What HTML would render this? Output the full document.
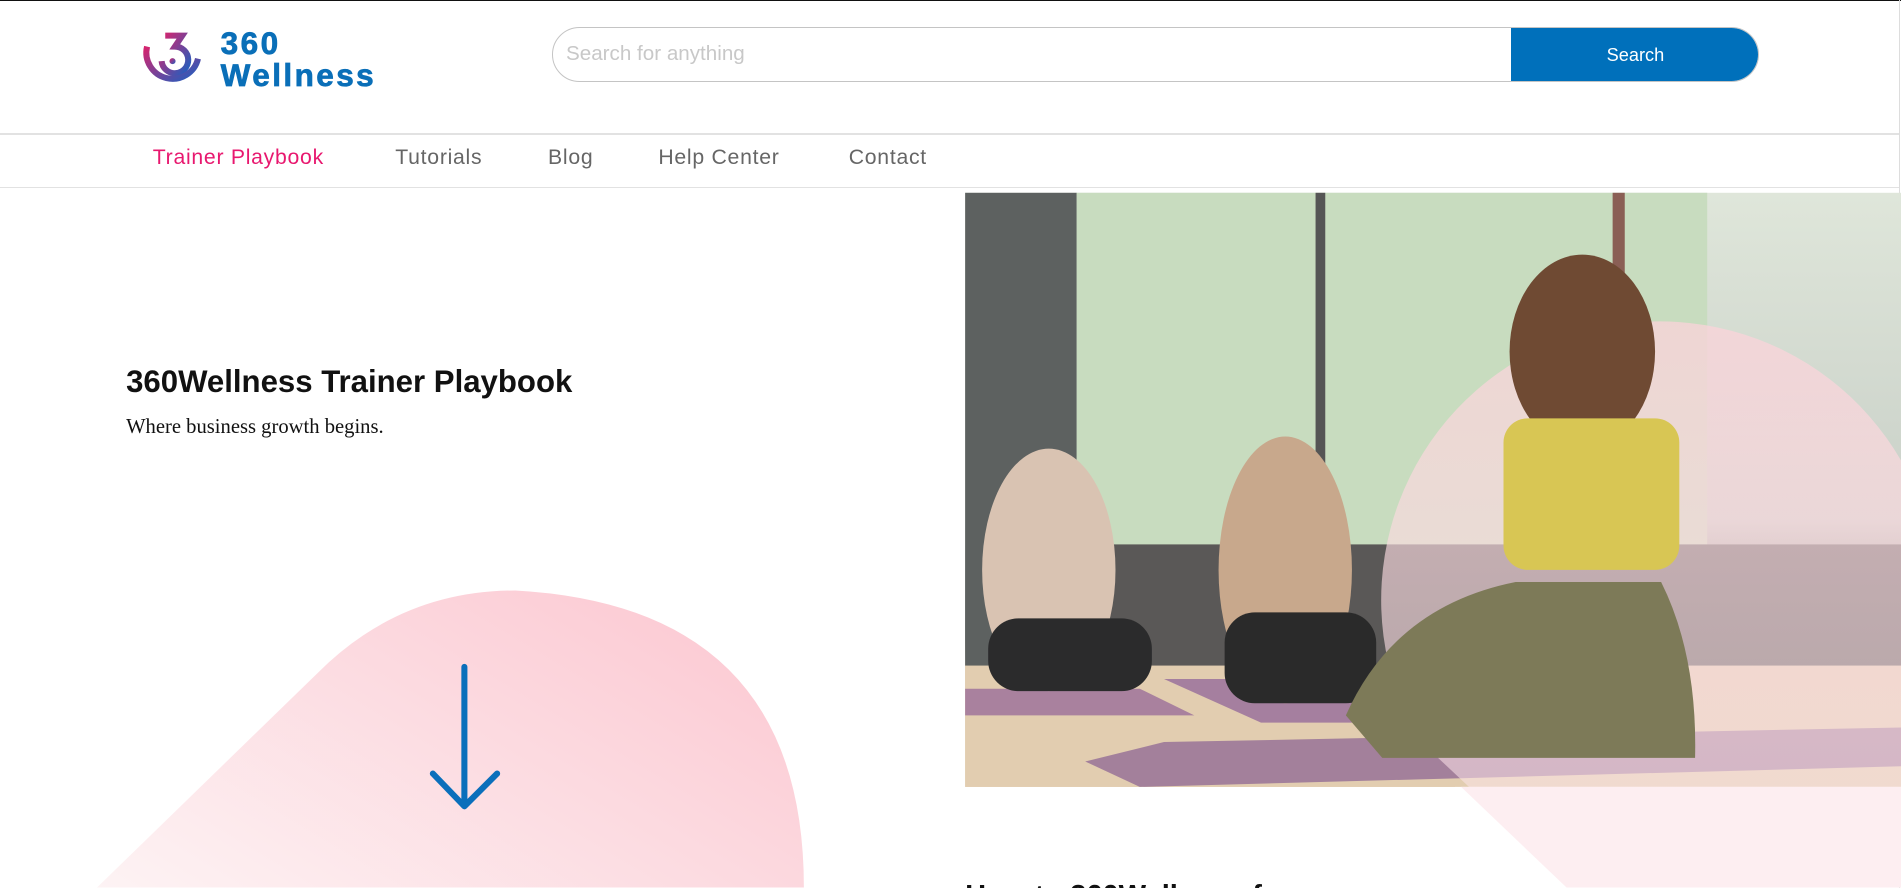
<!DOCTYPE html>
<html><head><meta charset="utf-8"><style>
html,body{margin:0;padding:0;overflow:hidden;background:#fff}
body{zoom:1.2125;width:1568px;height:732px;position:relative;font-family:"Liberation Sans",Arial,sans-serif}
.a{position:absolute}
.n{top:120px;font-size:17.5px;color:#666;letter-spacing:0.6px}
</style></head><body>
<div class="a" style="left:0;top:0;width:1568px;height:1px;background:#111"></div>
<div class="a" style="left:1566px;top:0;width:1px;height:732px;background:#ddd"></div>
<svg class="a" style="left:116px;top:26px" width="54" height="52" viewBox="0 0 54 52">
<defs><linearGradient id="lg" x1="0" y1="0" x2="1" y2="1"><stop offset="0" stop-color="#d6246e"/><stop offset="1" stop-color="#1e5fc0"/></linearGradient></defs>
<path d="M20 3 H34 L28 12 A11 11 0 1 1 17 24" fill="none" stroke="url(#lg)" stroke-width="5"/>
<path d="M5 12 A21 21 0 1 0 47 22" fill="none" stroke="url(#lg)" stroke-width="5"/>
<circle cx="26" cy="24" r="2.5" fill="url(#lg)"/>
</svg>
<div class="a" style="left:182px;top:22px;color:#0a6fb8;font-weight:900;font-size:26px;line-height:27px;letter-spacing:2px;-webkit-text-stroke:0.6px #0a6fb8">360<br>Wellness</div>
<div class="a" style="left:455px;top:22px;width:994px;height:44px;border:1px solid #c4c4c4;border-radius:23px;overflow:hidden;background:#fff">
<div class="a" style="left:11px;top:12px;color:#c8c8c8;font-size:17px">Search for anything</div>
<div class="a" style="left:790px;top:0;width:206px;height:46px;background:#0070bb;color:#fff;font-size:15px;text-align:center;line-height:46px">Search</div>
</div>
<div class="a" style="left:0;top:110px;width:1566px;height:1px;background:#e2e2e2"></div>
<div class="a" style="left:0;top:154px;width:1566px;height:1px;background:#e2e2e2"></div>
<div class="a n" style="left:126px;color:#e8186f">Trainer Playbook</div>
<div class="a n" style="left:326px">Tutorials</div>
<div class="a n" style="left:452px">Blog</div>
<div class="a n" style="left:543px">Help Center</div>
<div class="a n" style="left:700px">Contact</div>
<div class="a" style="left:104px;top:300px;font-size:25.7px;font-weight:bold;color:#111">360Wellness Trainer Playbook</div>
<div class="a" style="left:104px;top:343px;font-size:17px;font-family:'Liberation Serif',serif;color:#111">Where business growth begins.</div>
<svg class="a" style="left:0;top:0" width="1568" height="732">
<defs>
<linearGradient id="pk" x1="0" y1="1" x2="1" y2="0.3"><stop offset="0" stop-color="#fdf3f4"/><stop offset="1" stop-color="#fccbd4"/></linearGradient>
<linearGradient id="ph" x1="0" y1="0" x2="0" y2="1"><stop offset="0" stop-color="#dfe6da"/><stop offset="0.55" stop-color="#c9d0c8"/><stop offset="0.75" stop-color="#6b6a66"/><stop offset="0.8" stop-color="#d7c4a6"/><stop offset="1" stop-color="#e6d5bd"/></linearGradient>
<linearGradient id="pk2" x1="0" y1="0" x2="0" y2="1"><stop offset="0" stop-color="#fbd3da" stop-opacity="0.75"/><stop offset="1" stop-color="#fde8ec" stop-opacity="0.5"/></linearGradient>
</defs>
<path d="M80 732 L262 555 Q330 487 425 487 Q663 500 663 732 Z" fill="url(#pk)"/>
<path d="M383 550 V664 M357 638 L383 665 L410 638" fill="none" stroke="#0a6fbb" stroke-width="5" stroke-linecap="round" stroke-linejoin="round"/>
<rect x="796" y="159" width="772" height="490" fill="url(#ph)"/>
<rect x="796" y="159" width="92" height="390" fill="#5d6160"/>
<rect x="888" y="159" width="520" height="290" fill="#c8dcbf"/>
<rect x="1085" y="159" width="8" height="300" fill="#555"/>
<rect x="1330" y="159" width="10" height="300" fill="#8a5f55"/>
<rect x="888" y="449" width="680" height="100" fill="#5a5857"/>
<rect x="796" y="549" width="772" height="100" fill="#e2cdb0"/>
<polygon points="796,568 940,568 985,590 796,590" fill="#a9819e"/>
<polygon points="960,560 1120,560 1130,596 1040,596" fill="#a57f9f"/>
<polygon points="895,628 960,612 1568,600 1568,632 940,649" fill="#a3809b"/>
<ellipse cx="865" cy="470" rx="55" ry="100" fill="#d9c3b2"/>
<rect x="815" y="510" width="135" height="60" rx="25" fill="#2b2b2c"/>
<ellipse cx="1060" cy="470" rx="55" ry="110" fill="#c8a88c"/>
<rect x="1010" y="505" width="125" height="75" rx="25" fill="#2a2a2a"/>
<path d="M1300 732 L1170 610 A202 202 0 1 1 1568 380 V732 Z" fill="url(#pk2)"/>
<ellipse cx="1305" cy="290" rx="60" ry="80" fill="#6f4a33"/>
<rect x="1240" y="345" width="145" height="125" rx="20" fill="#d8c654"/>
<path d="M1110 590 Q1150 500 1250 480 L1370 480 Q1400 540 1398 625 L1140 625 Z" fill="#7d7a58"/>
<rect x="1200" y="649" width="368" height="83" fill="#fff"/>
<path d="M1205 649 L1292 732 L1568 732 V649 Z" fill="#fdeef1"/>
</svg>
<div class="a" style="left:796px;top:726px;font-size:24px;font-weight:bold;color:#111">How to 360Wellness for</div>
</body></html>
